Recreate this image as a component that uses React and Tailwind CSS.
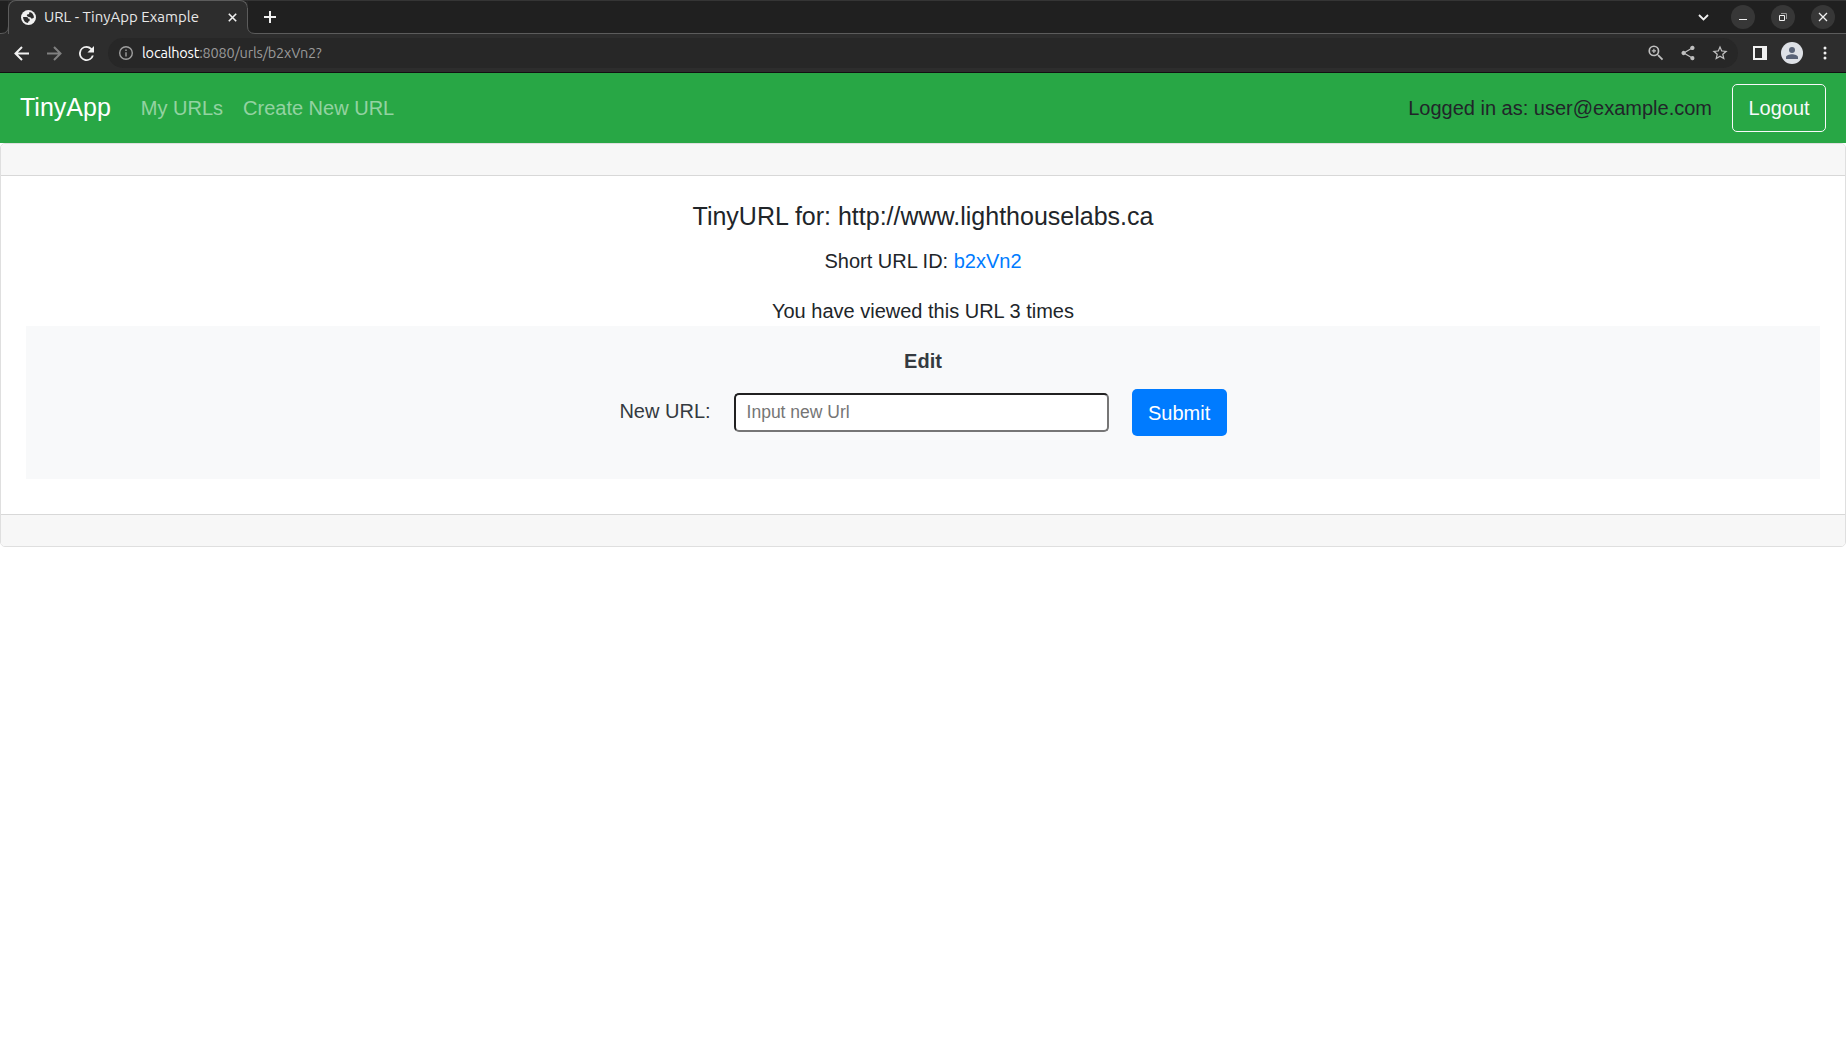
import React from "react";

const strokeProps = { fill: "none", stroke: "currentColor" };

function TabStrip() {
  return (
    <div className="flex h-[34px] items-stretch border-t border-[#353535] bg-[#202020] font-['Ubuntu','Noto_Sans',sans-serif]">
      <svg className="h-[33px] w-[9px] shrink-0" viewBox="0 0 9 33">
        <path d="M0 32.5H1Q8.5 32.5 8.5 25V0H9V33H0Z" fill="#2d2d2d" />
        <path d="M0 32.5H1Q8.5 32.5 8.5 25V7" {...strokeProps} className="text-[#5c5c5c]" />
      </svg>
      <div className="-ml-px -mt-px flex h-[34px] w-[240px] shrink-0 items-center rounded-t-[8px] border border-b-0 border-[#5c5c5c] bg-[#2d2d2d] pl-[12px] pr-[10px]">
        <svg className="size-[15px] shrink-0" viewBox="0 0 16 16">
          <circle cx="8" cy="8" r="8" fill="#f1f1f1" />
          <path d="M2.200 7.400H5.800C7.200 7.400 7.800 8.200 7.800 9.200H9.200V11.200C9.200 12 8.300 12.200 7.600 12.400V13.800C4.600 13.700 2.200 11 2.200 7.400Z" fill="#2d2d2d" />
          <path d="M9 2.200C11.800 2.600 13.700 5 13.800 7.800C13.300 8.900 12.300 9.300 11.200 9.300C10.800 8 9.800 7.600 8.600 7.400C7 7.200 6.200 6.500 6.200 5.600C6.200 4.600 7.200 4.500 8.200 4.500C9 4.300 8.700 3 9 2.200Z" fill="#2d2d2d" />
        </svg>
        <span className="ml-[8px] w-[160px] -translate-y-px whitespace-nowrap text-[15px] leading-[20px] text-[#e8e8e8]">URL - TinyApp Example</span>
        <svg className="ml-auto size-[9px] text-[#f1f1f1]" viewBox="0 0 9 9" strokeWidth="1.6" {...strokeProps}>
          <path d="m.8.800 7.400 7.400M8.200.800.800 8.200" />
        </svg>
      </div>
      <svg className="-ml-px h-[33px] w-[9px] shrink-0" viewBox="0 0 9 33">
        <path d="M0 0H.5V25Q.5 32.500 8 32.500H9V33H0Z" fill="#2d2d2d" />
        <path d="M.5 7V25Q.5 32.500 8 32.500H9" {...strokeProps} className="text-[#5c5c5c]" />
      </svg>
      <div className="flex flex-1 items-center border-b border-[#5c5c5c] pl-[8px] pr-[11px] text-[#f1f1f1]">
        <svg className="size-[12px]" viewBox="0 0 12 12" strokeWidth="2" {...strokeProps}>
          <path d="M6 0V12M0 6H12" />
        </svg>
        <svg className="ml-auto mr-[22px] h-[7px] w-[11px]" viewBox="0 0 11 7" strokeWidth="1.800" {...strokeProps}>
          <path d="m1 1 4.500 4.500L10 1" />
        </svg>
        <div className="flex gap-[16px]">
          <span className="flex size-[24px] items-center justify-center rounded-full bg-[#373737]">
            <svg className="size-[10px]" viewBox="0 0 10 10" {...strokeProps}><path d="M1 7.500H9" /></svg>
          </span>
          <span className="flex size-[24px] items-center justify-center rounded-full bg-[#373737]">
            <svg className="size-[10px]" viewBox="0 0 10 10" {...strokeProps}>
              <path d="M1.500 3.500h5v5h-5Z" />
              <path d="M3 1.500H8.500V7" stroke="#999" />
            </svg>
          </span>
          <span className="flex size-[24px] items-center justify-center rounded-full bg-[#373737]">
            <svg className="size-[10px]" viewBox="0 0 10 10" strokeWidth="1.300" {...strokeProps}><path d="m1 1 8 8M9 1 1 9" /></svg>
          </span>
        </div>
      </div>
    </div>
  );
}

function Toolbar() {
  return (
    <div className="flex h-[39px] items-center border-b border-[#111111] bg-[#2d2d2d] pl-[14px] pr-[19px] font-['Ubuntu','Noto_Sans',sans-serif]">
      <svg className="size-[15px] text-[#f1f1f1]" viewBox="0 0 15 15" strokeWidth="2" {...strokeProps}><path d="M15 7.500H2M8 1 1.500 7.500 8 14" /></svg>
      <svg className="ml-[18px] size-[15px] text-[#808080]" viewBox="0 0 15 15" strokeWidth="2" {...strokeProps}><path d="M0 7.500H13M7 1 13.500 7.500 7 14" /></svg>
      <svg className="ml-[17px] size-[15px]" viewBox="4 4 16 16" fill="#f1f1f1"><path d="M17.650 6.350A7.960 7.960 0 0 0 12 4a8 8 0 1 0 7.730 10h-2.080A6 6 0 1 1 12 6c1.660 0 3.140.690 4.220 1.780L13 11h7V4Z" /></svg>
      <div className="ml-[14px] flex h-[30px] w-[1630px] items-center rounded-full bg-[#272727] pl-[11px] pr-[10px]">
        <svg className="size-[14px] text-[#a0a0a0]" viewBox="0 0 14 14" strokeWidth="1.400" {...strokeProps}>
          <circle cx="7" cy="7" r="6.300" /><path d="M7 6.200V10.500M7 3.500V5" />
        </svg>
        <span className="ml-[9px] whitespace-nowrap text-[14.5px] leading-[20px] tracking-[-0.2px] text-[#9a9a9a]"><span className="text-white">localhost</span>:8080/urls/b2xVn2?</span>
        <div className="ml-auto flex items-center gap-[16px] text-[#c0c0c0]">
          <svg className="size-[16px]" viewBox="2.500 2.500 19 19" fill="currentColor"><path d="M15.500 14h-.790l-.280-.270A6.470 6.470 0 0 0 16 9.500 6.500 6.500 0 1 0 9.500 16c1.610 0 3.090-.590 4.230-1.570l.270.280v.790l5 4.990L20.490 19Zm-6 0a4.500 4.500 0 1 1 0-9 4.500 4.500 0 0 1 0 9Zm.700-7h-1.400v1.800H7v1.400h1.800V12h1.400v-1.800H12V8.800h-1.800Z" /></svg>
          <svg className="size-[16px]" viewBox="1 1 22 22" fill="currentColor"><path d="M18 16.080c-.760 0-1.440.300-1.960.770L8.910 12.700a3.300 3.300 0 0 0 0-1.400l7.050-4.110A2.990 2.990 0 1 0 15 5c0 .240.040.470.090.700L8.040 9.810a3 3 0 1 0 0 4.380l7.120 4.160a2.920 2.920 0 1 0 2.840-2.270Z" /></svg>
          <svg className="size-[16px]" viewBox="1.500 1.500 21 21" fill="currentColor"><path d="m22 9.240-7.190-.620L12 2 9.190 8.630 2 9.240l5.460 4.730L5.820 21 12 17.270 18.180 21l-1.630-7.030ZM12 15.400l-3.760 2.270 1-4.280-3.320-2.880 4.380-.380L12 6.100l1.710 4.040 4.380.380-3.320 2.880 1 4.280Z" /></svg>
        </div>
      </div>
      <svg className="ml-auto h-[14px] w-[14px]" viewBox="0 0 14 14"><path d="M0 0H14V14H0ZM2 2V12H9V2Z" fill="#f1f1f1" fillRule="evenodd" /></svg>
      <span className="ml-[14px] flex size-[22px] items-center justify-center rounded-full bg-[#dee1e6]">
        <svg className="h-[12px] w-[12px]" viewBox="0 0 12 12" fill="#5a6478"><circle cx="6" cy="3" r="3" /><path d="M0 12V10.300C0 8.200 3.500 7.200 6 7.200s6 1 6 3.100V12Z" /></svg>
      </span>
      <svg className="ml-[20px] h-[14px] w-[4px]" viewBox="0 0 4 14" fill="#f1f1f1"><circle cx="2" cy="2" r="1.500" /><circle cx="2" cy="7" r="1.500" /><circle cx="2" cy="12" r="1.500" /></svg>
    </div>
  );
}

function Navbar() {
  return (
    <nav className="flex h-[70px] items-center bg-[#28a745] px-5 text-[20px] leading-[30px] text-[#212529]">
      <a className="mr-5 pb-[2px] text-[25px] leading-[38px] text-white">TinyApp</a>
      <a className="px-[10px] text-white/50">My URLs</a>
      <a className="px-[10px] text-white/50">Create New URL</a>
      <span className="ml-auto mr-5">Logged in as: user@example.com</span>
      <button className="h-[48px] w-[94px] rounded-[5px] border border-[#f8f9fa] text-[#f8f9fa]">Logout</button>
    </nav>
  );
}

export default function App() {
  return (
    <div className="h-[1053px] overflow-hidden bg-white font-['Liberation_Sans',Arial,sans-serif]">
      <TabStrip />
      <Toolbar />
      <Navbar />
      <main className="flex h-[404px] flex-col overflow-hidden rounded-[5px] border border-[#dfdfdf] text-center text-[20px] leading-[30px] text-[#212529]">
        <div className="h-[32px] border-b border-[#d8d8d8] bg-[#f7f7f7]" />
        <div className="flex-1 px-[25px] pt-[25px]">
          <h5 className="text-[25px] leading-[30px]">TinyURL for: http://www.lighthouselabs.ca</h5>
          <p className="mt-[15px]">Short URL ID: <a className="text-[#007bff]">b2xVn2</a></p>
          <p className="mt-5">You have viewed this URL 3 times</p>
          <div className="flex h-[153px] flex-col items-center bg-[#f8f9fa] pt-[20px] text-[#343a40]">
            <b>Edit</b>
            <form className="mt-[13px] flex h-[47px] items-center">
              <label className="mr-[23px] pb-[3px]">New URL:</label>
              <input className="h-[39px] w-[375px] rounded-[5px] border-2 border-[#767676] border-l-[#212121] border-t-[#212121] bg-white px-[11px] text-[17.5px] placeholder:text-[#757575]" placeholder="Input new Url" />
              <button type="button" className="ml-[23px] h-[47px] w-[95px] rounded-[5px] bg-[#007bff] text-white">Submit</button>
            </form>
          </div>
        </div>
        <div className="h-[32px] border-t border-[#d8d8d8] bg-[#f7f7f7]" />
      </main>
    </div>
  );
}
